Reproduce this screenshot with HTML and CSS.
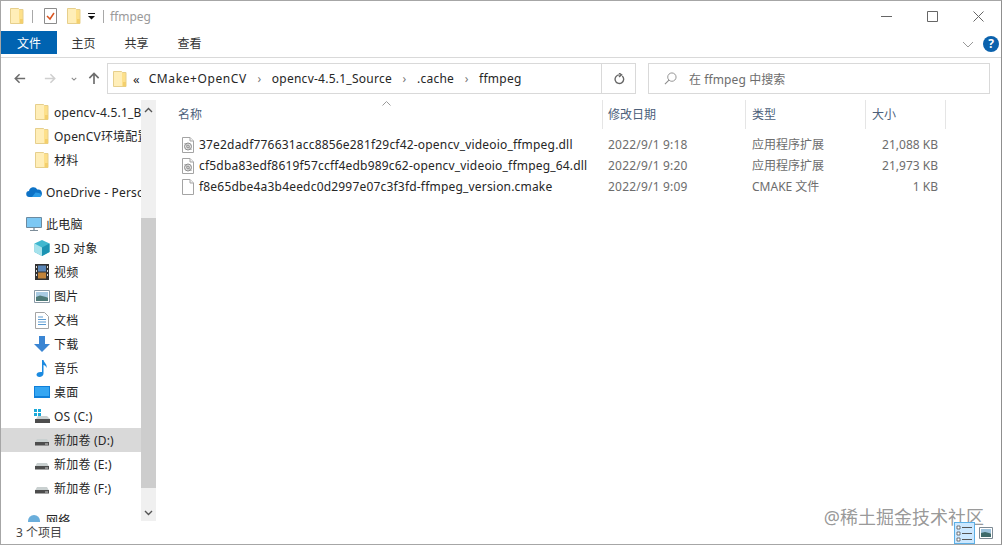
FILE: index.html
```html
<!DOCTYPE html>
<html lang="zh-CN">
<head>
    <meta charset="UTF-8">
    <title>ffmpeg</title>
    <link rel="stylesheet" href="styles.css">
</head>
<body>
    <svg class="defs" width="0" height="0">
        <symbol id="folder" viewBox="0 0 16 16">
            <path d="M1.500.500h8l1 1h3.500v14h-12.500z" fill="#fde08a" stroke="#e6cf8c"/>
            <path d="M2 1h8v14h-8z" fill="#ffeeb8"/>
            <path d="M11 11h3v4.500h-3z" fill="#f3cf6d"/>
        </symbol>
        <symbol id="dll" viewBox="0 0 12 16">
            <path d="M.5.500h7.500l3.500 3.500v11.500h-11z" fill="#fff" stroke="#a4a4a4"/>
            <path d="M8 .5v3.500h3.500" fill="#f2f2f2" stroke="#a4a4a4"/>
            <circle cx="6" cy="9.500" r="3.500" fill="#e4e4e4" stroke="#8c8c8c"/>
            <circle cx="6" cy="9.500" r="1.400" fill="#fff" stroke="#8c8c8c"/>
            <path d="M2.500 6l7 7" stroke="#a0a0a0"/>
        </symbol>
        <symbol id="blank" viewBox="0 0 12 16">
            <path d="M.5.500h7.500l3.500 3.500v11.500h-11z" fill="#fff" stroke="#a4a4a4"/>
            <path d="M8 .5v3.500h3.500" fill="#f2f2f2" stroke="#a4a4a4"/>
        </symbol>
        <symbol id="drive" viewBox="0 0 16 16">
            <path d="M3 7h10l2 3.500h-14z" fill="#c9d0d0"/>
            <path d="M1 10h14v3.500h-14z" fill="#4d4d4d"/>
            <path d="M11 11.500h3v1h-3z" fill="#cfcfcf"/>
        </symbol>
    </svg>

    <div class="window">
        <header class="titlebar">
            <div class="quick">
                <svg width="16" height="16"><use href="#folder"/></svg>
                <span class="sep"></span>
                <svg class="check" width="13" height="16" viewBox="0 0 13 16">
                    <path d="M.5.500h12v15h-12z" fill="#fff" stroke="#8c8c8c"/>
                    <path d="M3 8l3 3 4-6" fill="none" stroke="#d9531e" stroke-width="1.500"/>
                </svg>
                <svg width="16" height="16"><use href="#folder"/></svg>
                <svg class="qdrop" width="7" height="7" viewBox="0 0 7 7">
                    <path d="M0 0h7v1h-7zM0 3h7l-3.500 3.500z" fill="#111"/>
                </svg>
                <span class="sep sep-last"></span>
                <span class="title">ffmpeg</span>
            </div>
            <div class="controls">
                <svg width="11" height="11" viewBox="0 0 11 11"><path d="M0 5.500h11" stroke="#666"/></svg>
                <svg width="11" height="11" viewBox="0 0 11 11"><path d="M.5.500h10v10h-10z" fill="none" stroke="#666"/></svg>
                <svg width="11" height="11" viewBox="0 0 11 11"><path d="M.5.500l10 10M10.500.500l-10 10" stroke="#666"/></svg>
            </div>
        </header>

        <nav class="ribbon">
            <a class="tab tab-file">文件</a>
            <a class="tab">主页</a>
            <a class="tab">共享</a>
            <a class="tab">查看</a>
            <svg class="ribbon-chev" width="12" height="7" viewBox="0 0 12 7"><path d="M1 1l5 5 5-5" fill="none" stroke="#999"/></svg>
            <span class="help">?</span>
        </nav>

        <div class="addressrow">
            <div class="navbtns">
                <svg class="back" width="12" height="11" viewBox="0 0 14 12"><path d="M13 6H2M6.500 1l-5 5 5 5" fill="none" stroke="#6d6d6d" stroke-width="1.800"/></svg>
                <svg class="forward" width="12" height="11" viewBox="0 0 14 12"><path d="M1 6h11M7.500 1l5 5-5 5" fill="none" stroke="#cfcfcf" stroke-width="1.800"/></svg>
                <svg class="recent" width="6" height="4" viewBox="0 0 8 5"><path d="M1 1l3 3 3-3" fill="none" stroke="#8a8a8a" stroke-width="1.400"/></svg>
                <svg class="up" width="12" height="13" viewBox="0 0 12 14"><path d="M6 13V2M1 6.500l5-5 5 5" fill="none" stroke="#6d6d6d" stroke-width="1.800"/></svg>
            </div>
            <div class="address">
                <svg class="folder-ic" width="16" height="16"><use href="#folder"/></svg>
                <span class="crumbs-more">«</span>
                <span class="crumb crumb-first">CMake+OpenCV</span><i class="arrow">›</i>
                <span class="crumb">opencv-4.5.1_Source</span><i class="arrow">›</i>
                <span class="crumb">.cache</span><i class="arrow">›</i>
                <span class="crumb">ffmpeg</span>
                <span class="refresh">
                    <svg width="12" height="12" viewBox="0 0 14 14"><path d="M10.800 3.500a5 5 0 1 1-3.300-1.300M7 0l3 2.200L7 4.500" fill="none" stroke="#666" stroke-width="1.600"/></svg>
                </span>
            </div>
            <div class="search">
                <svg width="13" height="13" viewBox="0 0 14 14"><circle cx="8.500" cy="5.500" r="4.500" fill="none" stroke="#8c8c8c"/><path d="M5.300 8.800L1 13" stroke="#8c8c8c" stroke-width="1.200"/></svg>
                <span>在 ffmpeg 中搜索</span>
            </div>
        </div>

        <div class="main">
            <aside class="sidebar">
                <ul class="tree">
                    <li class="sub"><svg width="16" height="16"><use href="#folder"/></svg>opencv-4.5.1_Build</li>
                    <li class="sub"><svg width="16" height="16"><use href="#folder"/></svg>OpenCV环境配置</li>
                    <li class="sub"><svg width="16" height="16"><use href="#folder"/></svg>材料</li>
                    <li class="top gap"><svg width="16" height="12" viewBox="0 0 16 12"><path d="M3.500 11a3 3 0 0 1-.5-6 4.500 4.500 0 0 1 8.300-1.500 3.700 3.700 0 0 1 1.500 7.500z" fill="#0d72c6"/><path d="M6 11l3.500-4.500 3.500.5c3 1 2.500 4 .5 4z" fill="#2a9be6"/></svg>OneDrive - Personal</li>
                    <li class="top gap"><svg width="16" height="15" viewBox="0 0 16 15"><path d="M.5.500h15v10h-15z" fill="#7cc8f4" stroke="#6b8aa0"/><path d="M4 13h8v1h-8z" fill="#7d8d99"/><path d="M7 11h2v2h-2z" fill="#a5b4bf"/></svg>此电脑</li>
                    <li class="sub"><svg width="16" height="16" viewBox="0 0 16 16"><path d="M8 0l7.500 3.500v8.500l-7.500 4-7.500-4v-8.500z" fill="#3fb7cf"/><path d="M.5 3.500l7.500 4v8.500l-7.500-4z" fill="#a6e2ec"/><path d="M8 7.500l7.500-4v8.500l-7.500 4z" fill="#1b93b3"/></svg>3D 对象</li>
                    <li class="sub"><svg width="16" height="16" viewBox="-1 0 16 16"><path d="M0 0h14v16h-14z" fill="#333"/><path d="M3 1.500h8v6h-8z" fill="#5a86b8"/><path d="M3 8.500h8v6h-8z" fill="#c2843a"/><path d="M1 2h1v2h-1zM1 6h1v2h-1zM1 10h1v2h-1zM12 2h1v2h-1zM12 6h1v2h-1zM12 10h1v2h-1z" fill="#ddd"/></svg>视频</li>
                    <li class="sub"><svg width="16" height="13" viewBox="0 0 16 13"><path d="M.5.500h15v12h-15z" fill="#fff" stroke="#8a9aa6"/><path d="M2 2h12v5h-12z" fill="#a9cbe2"/><path d="M2 7l4-1.500 8 2v3.500h-12z" fill="#4e7a77"/></svg>图片</li>
                    <li class="sub"><svg width="16" height="17" viewBox="-1 0 16 17"><path d="M.5.500h9l4 4v12h-13z" fill="#fff" stroke="#a4a4a4"/><path d="M3 5h5M3 7.500h8M3 10h8M3 12.500h8" stroke="#5c9bd1"/></svg>文档</li>
                    <li class="sub"><svg width="16" height="16" viewBox="0 0 16 16"><path d="M5 0h6v8h5l-8 8-8-8h5z" fill="#3a85d3"/></svg>下载</li>
                    <li class="sub"><svg width="16" height="17" viewBox="0 0 16 17"><path d="M8 0h1.500c.5 3 4 4 3 8-.5-2-2-3-3-3v8.500c0 2-2 3.500-4 3.500s-3-1-3-2.500 2-3 5.500-2.500z" fill="#1b8ae0"/></svg>音乐</li>
                    <li class="sub"><svg width="16" height="12" viewBox="0 0 16 12"><path d="M0 0h16v12h-16z" fill="#0f7fd9"/><path d="M1 1h14v9h-14z" fill="#35a6f2"/></svg>桌面</li>
                    <li class="sub"><svg width="16" height="16" viewBox="0 0 16 16"><path d="M0 1h3v3h-3zM4 1h3v3h-3zM0 5h3v3h-3zM4 5h3v3h-3z" fill="#19a9d9"/><path d="M4 8h9l3 3h-14z" fill="#c9d0d0"/><path d="M1 11h15v4h-15z" fill="#4d4d4d"/></svg>OS (C:)</li>
                    <li class="sub selected"><svg width="16" height="16"><use href="#drive"/></svg>新加卷 (D:)</li>
                    <li class="sub"><svg width="16" height="16"><use href="#drive"/></svg>新加卷 (E:)</li>
                    <li class="sub"><svg width="16" height="16"><use href="#drive"/></svg>新加卷 (F:)</li>
                    <li class="top gap"><svg width="16" height="14" viewBox="0 0 16 14"><path d="M2 8a6 6 0 0 1 12 0v6h-12z" fill="#6aaedb"/><path d="M0 9h16v5h-16z" fill="#a7d0ea"/></svg>网络</li>
                </ul>
                <div class="scrollbar">
                    <svg class="scroll-btn" width="9" height="6" viewBox="0 0 9 6"><path d="M1 5l3.500-3.500 3.500 3.500" fill="none" stroke="#555" stroke-width="1.400"/></svg>
                    <div class="thumb"></div>
                    <svg class="scroll-btn scroll-down" width="9" height="6" viewBox="0 0 9 6"><path d="M1 1l3.500 3.500 3.500-3.500" fill="none" stroke="#555" stroke-width="1.400"/></svg>
                </div>
            </aside>

            <section class="files">
                <svg class="sort" width="9" height="5" viewBox="0 0 9 5"><path d="M.5 4.500l4-4 4 4" fill="none" stroke="#9a9a9a"/></svg>
                <div class="row head">
                    <span>名称</span>
                    <span>修改日期</span>
                    <span>类型</span>
                    <span>大小</span>
                </div>
                <div class="row item">
                    <span class="name"><svg width="12" height="16"><use href="#dll"/></svg>37e2dadf776631acc8856e281f29cf42-opencv_videoio_ffmpeg.dll</span>
                    <span class="date">2022/9/1 9:18</span>
                    <span>应用程序扩展</span>
                    <span class="size">21,088 KB</span>
                </div>
                <div class="row item">
                    <span class="name"><svg width="12" height="16"><use href="#dll"/></svg>cf5dba83edf8619f57ccff4edb989c62-opencv_videoio_ffmpeg_64.dll</span>
                    <span class="date">2022/9/1 9:20</span>
                    <span>应用程序扩展</span>
                    <span class="size">21,973 KB</span>
                </div>
                <div class="row item">
                    <span class="name"><svg width="12" height="16"><use href="#blank"/></svg>f8e65dbe4a3b4eedc0d2997e07c3f3fd-ffmpeg_version.cmake</span>
                    <span class="date">2022/9/1 9:09</span>
                    <span>CMAKE 文件</span>
                    <span class="size">1 KB</span>
                </div>
            </section>
        </div>

        <footer class="status">
            <span class="count">3 个项目</span>
            <div class="views">
                <span class="view-btn active">
                    <svg width="17" height="17" viewBox="0 0 17 17"><path d="M1 1h3v3h-3zM1 7h3v3h-3zM1 13h3v3h-3z" fill="#fff" stroke="#555" stroke-width=".8"/><path d="M6 2.500h10M6 8.500h10M6 14.500h10" stroke="#555"/></svg>
                </span>
                <svg width="14" height="12" viewBox="0 0 14 12"><path d="M.5.500h13v11h-13z" fill="#fff" stroke="#7d8a94"/><path d="M2 2h10v4h-10z" fill="#9cc2dc"/><path d="M2 6l4-1 6 1.500v3.500h-10z" fill="#3f6b6b"/></svg>
            </div>
        </footer>

        <div class="watermark">@稀土掘金技术社区</div>
    </div>
</body>
</html>
```

FILE: styles.css
```css
* {
    box-sizing: border-box;
}

html, body {
    margin: 0;
    height: 100%;
    overflow: hidden;
    background: #fff;
}

body {
    font-family: "Noto Sans", "Noto Sans CJK SC", sans-serif;
    font-size: 12px;
    color: #262626;
}

.defs {
    position: absolute;
}

svg {
    display: block;
    flex: none;
}

.window {
    position: relative;
    display: flex;
    flex-direction: column;
    width: 1002px;
    height: 545px;
    border: 1px solid #a6a6a6;
    border-right-color: #8f8f8f;
    overflow: hidden;
}

/* title bar */
.titlebar {
    display: flex;
    justify-content: space-between;
    align-items: center;
    height: 30px;
    flex: none;
}

.quick {
    display: flex;
    align-items: center;
    padding-left: 8px;
}

.quick .sep {
    width: 1px;
    height: 13px;
    background: #a8a8a8;
    margin: 0 11px 0 7px;
}

.quick .sep-last {
    margin: 0 6px 0 8px;
}

.quick .check {
    margin-right: 9px;
}

.qdrop {
    margin-left: 6px;
}

.title {
    color: #9a9a9a;
}

.controls {
    display: flex;
    gap: 35px;
    padding-right: 17px;
}

/* ribbon tabs */
.ribbon {
    display: flex;
    align-items: flex-start;
    height: 27px;
    flex: none;
    border-bottom: 1px solid #d9d9d9;
}

.tab {
    width: 53px;
    height: 23px;
    line-height: 25px;
    text-align: center;
    color: #333;
}

.tab-file {
    width: 56px;
    background: #0063b1;
    color: #fff;
}

.ribbon-chev {
    margin: 10px 0 0 auto;
}

.help {
    width: 16px;
    height: 16px;
    margin: 5px 2px 0 9px;
    border-radius: 50%;
    background: #0b62ad;
    color: #fff;
    font-weight: 700;
    line-height: 16px;
    text-align: center;
}

/* address bar */
.addressrow {
    display: flex;
    align-items: center;
    height: 40px;
    padding: 5px 0 4px 13px;
    flex: none;
}

.navbtns {
    display: flex;
    align-items: center;
    width: 93px;
}

.navbtns .forward {
    margin-left: 18px;
}

.navbtns .recent {
    margin-left: 15px;
}

.navbtns .up {
    margin-left: 11px;
}

.address {
    display: flex;
    align-items: center;
    width: 529px;
    height: 31px;
    padding-left: 4px;
    border: 1px solid #d9d9d9;
}

.address .folder-ic {
    margin-right: 5px;
}

.crumbs-more {
    margin-right: 9px;
    font-size: 13px;
}

.crumb {
    letter-spacing: .25px;
}

.crumb-first {
    letter-spacing: .6px;
}

.arrow {
    width: 25px;
    text-align: center;
    font-style: normal;
    color: #777;
}

.refresh {
    display: flex;
    align-items: center;
    justify-content: center;
    width: 34px;
    height: 100%;
    margin-left: auto;
    border-left: 1px solid #d9d9d9;
}

.search {
    display: flex;
    align-items: center;
    gap: 12px;
    width: 342px;
    height: 31px;
    margin-left: 12px;
    padding-left: 15px;
    border: 1px solid #d9d9d9;
    color: #6d6d6d;
    letter-spacing: .1px;
}

/* sidebar tree */
.main {
    display: flex;
    flex: 1;
    min-height: 0;
}

.sidebar {
    display: flex;
    flex: none;
    width: 159px;
    overflow: hidden;
}

.tree {
    width: 140px;
    margin: 0;
    padding: 2px 0 0;
    list-style: none;
    flex: none;
    letter-spacing: .2px;
}

.tree li {
    display: flex;
    align-items: center;
    height: 24px;
    white-space: nowrap;
    overflow: hidden;
}

.tree li svg {
    width: 16px;
    margin-right: 4px;
}

.tree .sub {
    padding-left: 33px;
}

.tree .top {
    padding-left: 25px;
}

.tree .gap {
    margin-top: 8px;
}

.tree .selected {
    background: #d9d9d9;
}

.scrollbar {
    display: flex;
    flex-direction: column;
    align-items: center;
    width: 15px;
    height: 421px;
    margin-top: 2px;
    background: #f0f0f0;
}

.scroll-btn {
    margin-top: 7px;
}

.thumb {
    width: 100%;
    height: 270px;
    margin-top: 105px;
    background: #cdcdcd;
}

.scroll-down {
    margin-top: 22px;
}

/* file list */
.files {
    position: relative;
    flex: 1;
}

.sort {
    position: absolute;
    top: 3px;
    left: 222px;
}

.row {
    display: grid;
    grid-template-columns: 443px 143px 120px 80px;
}

.row > span {
    padding-left: 6px;
    white-space: nowrap;
}

.row > span:first-child {
    padding-left: 18px;
}

.head {
    height: 31px;
    margin-bottom: 5px;
    padding-top: 2px;
    color: #4c607a;
    line-height: 29px;
}

.head > span {
    border-right: 1px solid #e5e5e5;
}

.head > span:nth-child(2) {
    padding-left: 5px;
}

.item {
    height: 21px;
    line-height: 21px;
    color: #6d6d6d;
}

.row > .name:first-child {
    display: flex;
    align-items: center;
    gap: 5px;
    padding-left: 22px;
    color: #262626;
    letter-spacing: .19px;
}

.row > .date {
    padding-left: 5px;
    letter-spacing: .2px;
}

.row > .size {
    padding: 0 8px 0 0;
    text-align: right;
}

/* status bar */
.status {
    display: flex;
    justify-content: space-between;
    align-items: center;
    height: 22px;
    flex: none;
    padding: 0 8px 0 15px;
    color: #444;
}

.count {
    margin-bottom: 2px;
}

.views {
    position: relative;
    z-index: 1;
    display: flex;
    align-items: center;
    gap: 4px;
}

.view-btn {
    display: flex;
    align-items: center;
    justify-content: center;
    width: 21px;
    height: 22px;
}

.view-btn.active {
    background: #cce8ff;
    border: 1px solid #5cb0e6;
}

.watermark {
    position: absolute;
    right: 17px;
    bottom: 15px;
    font-size: 18px;
    color: rgba(140, 140, 140, .9);
    text-shadow: 0 0 2px #fff;
    white-space: nowrap;
}
```
